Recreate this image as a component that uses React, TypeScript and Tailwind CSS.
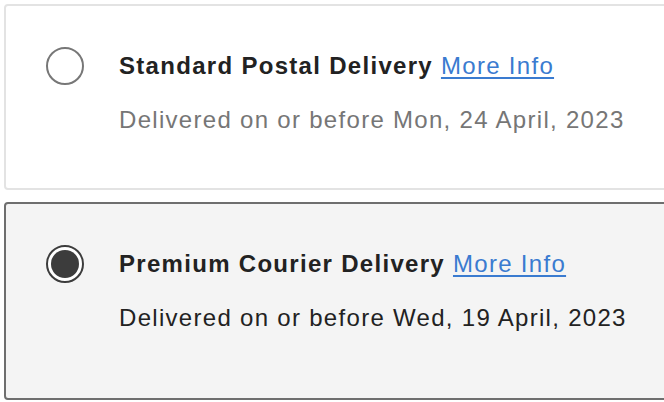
import { useState } from "react";

// Opsi pengiriman
const options = [
  {
    id: "standard",
    title: "Standard Postal Delivery",
    date: "Delivered on or before Mon, 24 April, 2023",
  },
  {
    id: "premium",
    title: "Premium Courier Delivery",
    date: "Delivered on or before Wed, 19 April, 2023",
  },
];

function Radio({ checked }: { checked: boolean }) {
  return (
    <div
      className={
        checked
          ? "w-[38px] h-[38px] shrink-0 rounded-full border-2 border-[#3c3c3c] bg-white flex items-center justify-center"
          : "w-[38px] h-[38px] shrink-0 rounded-full border-2 border-[#777777] bg-white flex items-center justify-center"
      }
    >
      {checked && <div className="w-[28px] h-[28px] rounded-full bg-[#3c3c3c]" />}
    </div>
  );
}

export default function App() {
  const [selected, setSelected] = useState("premium");

  return (
    <div
      className="w-screen h-screen overflow-hidden bg-white pl-[4px] pt-[4px]"
      style={{ fontFamily: '"Liberation Sans", Arial, sans-serif' }}
    >
      <div className="w-[720px] flex flex-col gap-[12px]">
        {options.map((opt) => {
          const active = selected === opt.id;
          return (
            <div
              key={opt.id}
              onClick={() => setSelected(opt.id)}
              className={
                active
                  ? "flex items-start gap-[35px] rounded-[4px] border-2 border-[#6e6e6e] bg-[#f4f4f4] pl-[40px] pt-[44px] pb-[64px] cursor-pointer"
                  : "flex items-start gap-[35px] rounded-[4px] border-2 border-[#e3e3e3] bg-white pl-[40px] pt-[44px] pb-[52px] cursor-pointer"
              }
            >
              <div className="-mt-[3px]">
                <Radio checked={active} />
              </div>
              <div className="flex flex-col gap-[22px] tracking-[1.3px] text-[24px] leading-[32px]">
                <div className="text-[#222222]">
                  <span className="font-bold">{opt.title}</span>{" "}
                  <a href="#" className="text-[#3a7bd0] underline underline-offset-[3px]">
                    More Info
                  </a>
                </div>
                <div className={active ? "text-[#222222]" : "text-[#767676]"}>
                  {opt.date}
                </div>
              </div>
            </div>
          );
        })}
      </div>
    </div>
  );
}
